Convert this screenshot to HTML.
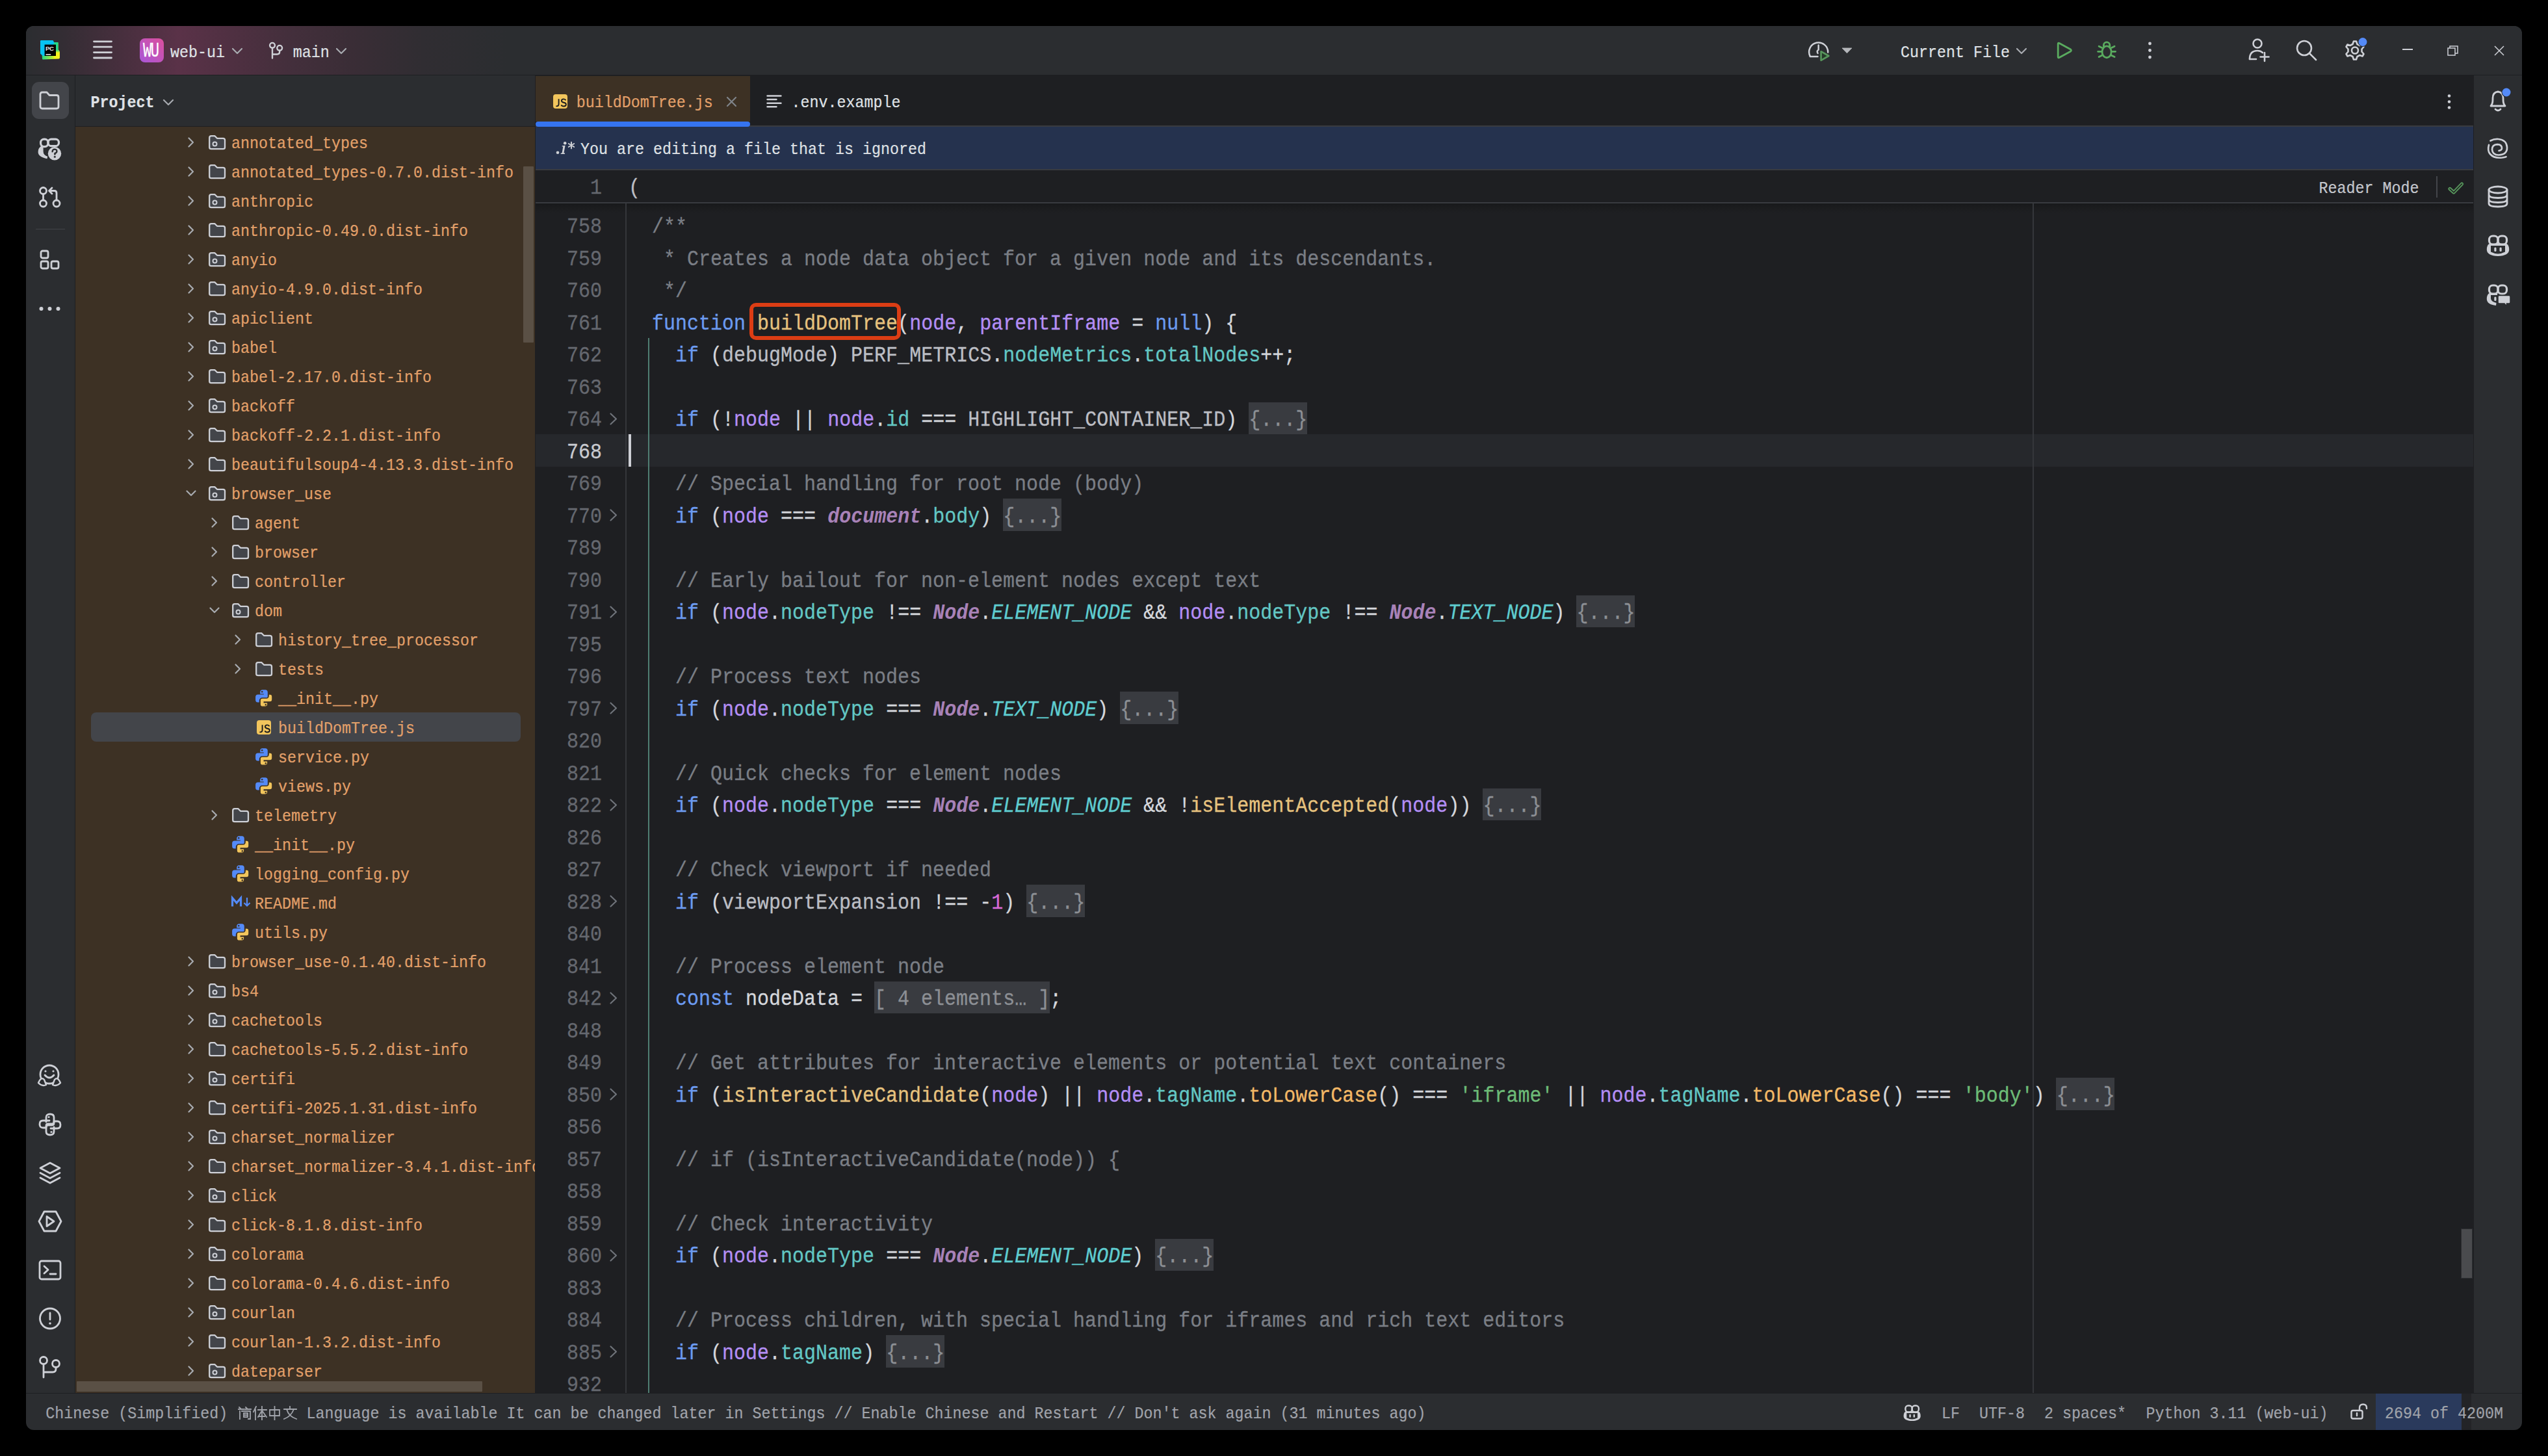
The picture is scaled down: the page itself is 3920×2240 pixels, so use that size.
<!DOCTYPE html><html><head><meta charset="utf-8"><style>
*{margin:0;padding:0;box-sizing:border-box}
html,body{width:3920px;height:2240px;background:#000;overflow:hidden}
body{font-family:"Liberation Mono",monospace}
#win{position:absolute;left:0;top:0;width:3920px;height:2240px;clip-path:inset(40px round 12px);background:#2b2d30}
.a{position:absolute}
.t{white-space:pre;-webkit-text-stroke:0.2px currentColor}
svg.a{overflow:visible}
.s{fill:none;stroke:#ced0d6;stroke-width:2.6;stroke-linecap:round;stroke-linejoin:round}
.code{font-size:30px;line-height:49.5px;white-space:pre;color:#bcbec4;transform:scaleY(1.08);transform-origin:0 32.74px;-webkit-text-stroke:0.3px currentColor}
.k{color:#6c9bf0}.f{color:#e6c27e}.m{color:#f2b866}.p{color:#b48ef5}.pr{color:#63c7c4}
.c{color:#7a7e85}.st{color:#6dbb77}.n{color:#d86ad8}.cls{color:#a882b8;font-style:italic;font-weight:bold;-webkit-text-stroke:0}
.sc{color:#5fcdd0;font-style:italic}.w{color:#d5d7dc}
.fold{color:#8c8f94}
</style></head><body><div id="win"><div class="a" style="left:40px;top:40px;width:3840px;height:75px;background:#2b2d30;"></div><div class="a" style="left:40px;top:40px;width:760px;height:75px;background:linear-gradient(90deg,rgb(43,45,48) 0px,rgb(52,45,52) 60px,rgb(72,47,62) 150px,rgb(90,50,72) 235px,rgb(80,48,66) 310px,rgb(68,47,60) 400px,rgb(58,45,54) 500px,rgb(48,45,50) 610px,rgb(43,45,48) 740px);"></div><div class="a" style="left:40px;top:115px;width:3840px;height:1px;background:#1e1f22;"></div><svg class="a" style="left:62px;top:62px;" width="30" height="30" viewBox="0 0 30 30"><defs><linearGradient id="pcg" x1="0" y1="0" x2="1" y2="0"><stop offset="0" stop-color="#21d789"/><stop offset=".55" stop-color="#a8ec3c"/><stop offset=".75" stop-color="#f5f21e"/></linearGradient><linearGradient id="pcg2" x1="0" y1="0" x2="0" y2="1"><stop offset="0" stop-color="#21d789"/><stop offset=".45" stop-color="#21d789"/><stop offset=".65" stop-color="#f5f21e"/></linearGradient></defs>
<path d="M2.5 21 L3 28.5 Q3.2 29.8 4.5 29.6 L28.5 28.5 Q29.8 28.4 29.8 27 V17.5 L27.5 14 V4 Q27.5 3 26.5 3 H20 L14 12 Z" fill="url(#pcg)"/><path d="M20 3 H26.5 Q27.5 3 27.5 4 V14 L29.8 17.5 V27 L22 28 Z" fill="url(#pcg2)"/>
<path d="M0 1.2 Q0 0 1.2 0 H19.5 L21.5 3.5 L13 24 H4 L0 20.5 Z" fill="#07c3f2"/>
<rect x="6.6" y="6.6" width="17.4" height="17.4" fill="#000"/><text x="7.9" y="15.9" font-family="Liberation Sans" font-weight="bold" font-size="9.6" fill="#e8e8e8" letter-spacing="-0.4">PC</text><rect x="8.5" y="21" width="7.7" height="1.7" fill="#d8d8d8"/></svg><svg class="a" style="left:143px;top:62px;" width="30" height="30" viewBox="0 0 30 30"><line x1="1.5" y1="1.8" x2="28.5" y2="1.8" stroke="#ced0d6" stroke-width="2.8" stroke-linecap="round"/><line x1="1.5" y1="10.2" x2="28.5" y2="10.2" stroke="#ced0d6" stroke-width="2.8" stroke-linecap="round"/><line x1="1.5" y1="18.6" x2="28.5" y2="18.6" stroke="#ced0d6" stroke-width="2.8" stroke-linecap="round"/><line x1="1.5" y1="27" x2="28.5" y2="27" stroke="#ced0d6" stroke-width="2.8" stroke-linecap="round"/></svg><svg class="a" style="left:215px;top:59px;" width="37" height="37" viewBox="0 0 37 37"><defs><linearGradient id="wug" x1="0" y1="1" x2="1" y2="0"><stop offset="0" stop-color="#a857d8"/><stop offset="1" stop-color="#dc4f9c"/></linearGradient></defs>
<rect x="0" y="0" width="37" height="37" rx="8" fill="url(#wug)"/></svg><div class="a t" style="left:219.5px;top:67.58px;font-size:23.33px;line-height:26.43px;color:#ffffff;transform:scaleY(1.35);transform-origin:0 19.42px;letter-spacing:-1.5px;transform:scale(0.95,1.35)">WU</div><div class="a t" style="left:262px;top:68.58px;font-size:23.33px;line-height:26.43px;color:#dfe1e5;transform:scaleY(1.14);transform-origin:0 19.42px;">web-ui</div><svg class="a" style="left:356.5px;top:73.5px;" width="16" height="9" viewBox="0 0 16 9"><path d="M1 1 L8 8 L15 1" fill="none" stroke="#a8abb0" stroke-width="2.2" stroke-linecap="round" stroke-linejoin="round"/></svg><svg class="a" style="left:414px;top:65px;" width="22" height="26" viewBox="0 0 22 26"><circle cx="5" cy="4.8" r="3.9" fill="none" stroke="#ced0d6" stroke-width="2.4" stroke-linecap="round"/><circle cx="16.2" cy="8.8" r="3.9" fill="none" stroke="#ced0d6" stroke-width="2.4" stroke-linecap="round"/><path d="M5 8.7 V24.5 M16.2 12.7 V14.5 Q16.2 18.5 12.2 18.5 H5" fill="none" stroke="#ced0d6" stroke-width="2.4" stroke-linecap="round"/></svg><div class="a t" style="left:450.8px;top:68.58px;font-size:23.33px;line-height:26.43px;color:#dfe1e5;transform:scaleY(1.14);transform-origin:0 19.42px;">main</div><svg class="a" style="left:517px;top:73.5px;" width="16" height="9" viewBox="0 0 16 9"><path d="M1 1 L8 8 L15 1" fill="none" stroke="#a8abb0" stroke-width="2.2" stroke-linecap="round" stroke-linejoin="round"/></svg><svg class="a" style="left:2775px;top:55px;" width="85" height="45" viewBox="0 0 85 45"><path d="M9.8 31.6 A14.5 14.5 0 1 1 37.2 25.5" fill="none" stroke="#ced0d6" stroke-width="2.5" stroke-linecap="round"/><path d="M9.8 32 H21.5" stroke="#ced0d6" stroke-width="2.5" stroke-linecap="round"/><path d="M22.7 14.6 V21.5 Q19.6 23.4 21.6 27" fill="none" stroke="#ced0d6" stroke-width="2.5" stroke-linecap="round"/><path d="M26.6 24.2 L38.4 31 L26.6 37.8 Z" fill="#253a28" stroke="#57965c" stroke-width="2.6" stroke-linejoin="round"/><path d="M59 19 H74 L66.5 26.7 Z" fill="#b4b6ba" stroke="#b4b6ba" stroke-width="0.8" stroke-linejoin="round"/></svg><div class="a t" style="left:2924px;top:68.58px;font-size:23.33px;line-height:26.43px;color:#dfe1e5;transform:scaleY(1.14);transform-origin:0 19.42px;">Current File</div><svg class="a" style="left:3102px;top:74px;" width="16" height="9" viewBox="0 0 16 9"><path d="M1 1 L8 8 L15 1" fill="none" stroke="#a8abb0" stroke-width="2.2" stroke-linecap="round" stroke-linejoin="round"/></svg><svg class="a" style="left:3164px;top:64px;" width="25" height="27" viewBox="0 0 25 27"><path d="M2.2 3.5 Q2.2 1.4 4.2 2.4 L21.6 12 Q23.2 13.5 21.6 15 L4.2 24.6 Q2.2 25.6 2.2 23.5 Z" fill="none" stroke="#5aab5f" stroke-width="2.8" stroke-linejoin="round"/></svg><svg class="a" style="left:3220px;top:58px;" width="42" height="37" viewBox="0 0 42 37"><path d="M16.4 14.5 V11.5 A4.7 4.7 0 0 1 25.8 11.5 V14.5" fill="none" stroke="#5aab5f" stroke-width="2.8"/><ellipse cx="21.1" cy="21.85" rx="7.1" ry="8.9" fill="none" stroke="#5aab5f" stroke-width="2.8"/><path d="M9.1 13.2 L13.7 15.4 M7.6 21.3 H12.4 M9.1 29.5 L13.7 27.2 M33.1 13.2 L28.5 15.4 M34.6 21.3 H29.8 M33.1 29.5 L28.5 27.2" stroke="#5aab5f" stroke-width="2.8" stroke-linecap="round"/></svg><svg class="a" style="left:3303px;top:64px;" width="10" height="27" viewBox="0 0 10 27"><circle cx="4.5" cy="3" r="2.4" fill="#ced0d6"/><circle cx="4.5" cy="13.5" r="2.4" fill="#ced0d6"/><circle cx="4.5" cy="24" r="2.4" fill="#ced0d6"/></svg><svg class="a" style="left:3459px;top:59px;" width="33" height="36" viewBox="0 0 33 36"><circle cx="14" cy="8" r="6.5" class="s"/><path d="M2 32 Q2 19 14 19 Q19 19 22 22" class="s"/><path d="M2 32 H12 M25 22 V35 M18.5 28.5 H31.5" class="s"/></svg><svg class="a" style="left:3532px;top:61px;" width="33" height="33" viewBox="0 0 33 33"><circle cx="13" cy="13" r="11" class="s"/><path d="M21 21 L31 31" class="s"/></svg><svg class="a" style="left:3606px;top:59px;" width="34" height="36" viewBox="0 0 34 36"><path d="M17 4.5 L21 4.5 L22.5 9 L26.5 11 L30.5 9.5 L32.5 13 L29.5 16.5 L29.5 20.5 L32.5 24 L30.5 27.5 L26.5 26 L22.5 28 L21 32.5 L17 32.5 L15.5 28 L11.5 26 L7.5 27.5 L5.5 24 L8.5 20.5 L8.5 16.5 L5.5 13 L7.5 9.5 L11.5 11 L15.5 9 Z" transform="translate(-2,0)" class="s"/><circle cx="17" cy="18.5" r="5" class="s"/><circle cx="29" cy="5.5" r="7.5" fill="#2b2d30"/><circle cx="29" cy="5.5" r="6.5" fill="#548af7"/></svg><div class="a" style="left:3696px;top:75px;width:16px;height:2px;background:#ced0d6;"></div><svg class="a" style="left:3765px;top:70px;" width="17" height="16" viewBox="0 0 17 16"><rect x="1" y="4" width="11" height="11" fill="none" stroke="#ced0d6" stroke-width="1.5"/><path d="M4 4 V1 H16 V12 H12" fill="none" stroke="#ced0d6" stroke-width="1.5"/></svg><svg class="a" style="left:3837px;top:70px;" width="16" height="16" viewBox="0 0 16 16"><path d="M1 1 L15 15 M15 1 L1 15" stroke="#ced0d6" stroke-width="1.5"/></svg><div class="a" style="left:115px;top:116px;width:1px;height:2027px;background:#1e1f22;"></div><div class="a" style="left:49px;top:126px;width:57px;height:57px;background:#43454a;border-radius:11px"></div><svg class="a" style="left:59px;top:139px;" width="34" height="30" viewBox="0 0 34 30"><path d="M3 6 Q3 3 6 3 H13 L17 7.5 H28 Q31 7.5 31 10.5 V25 Q31 28 28 28 H6 Q3 28 3 25 Z" fill="none" stroke="#ced0d6" stroke-width="2.8" stroke-linecap="round" stroke-linejoin="round"/></svg><svg class="a" style="left:58px;top:212px;" width="36" height="36" viewBox="0 0 36 36"><rect x="4.6" y="2.2" width="11.4" height="11.4" rx="5" fill="none" stroke="#ced0d6" stroke-width="3.2"/><rect x="16" y="2.2" width="16.5" height="10.5" rx="5" fill="none" stroke="#ced0d6" stroke-width="3.2"/><path d="M5 13 Q0.6 16 0.6 22 Q0.8 29.5 14.5 32.2 L15.2 28.8 Q8.6 26.5 8.6 21 L8.6 13 Z" fill="#ced0d6"/><circle cx="26" cy="24.2" r="10.2" fill="#ced0d6"/><path d="M22.6 21.2 Q22.8 17.6 26.2 17.6 Q29.6 17.8 29.4 20.8 Q29.2 23 26.4 24 V25.6" fill="none" stroke="#2b2d30" stroke-width="2.4" stroke-linecap="round"/><circle cx="26.3" cy="29.2" r="1.5" fill="#2b2d30"/></svg><svg class="a" style="left:58px;top:286px;" width="36" height="34" viewBox="0 0 36 34"><circle cx="8.5" cy="7.5" r="5" fill="none" stroke="#ced0d6" stroke-width="2.8" stroke-linecap="round" stroke-linejoin="round"/><circle cx="8.5" cy="27" r="5" fill="none" stroke="#ced0d6" stroke-width="2.8" stroke-linecap="round" stroke-linejoin="round"/><circle cx="29" cy="27" r="5" fill="none" stroke="#ced0d6" stroke-width="2.8" stroke-linecap="round" stroke-linejoin="round"/><path d="M8.5 12.5 V22 M29 22 V11 Q29 7.5 25.5 7.5 H18 M22 3 L17.5 7.5 L22 12" fill="none" stroke="#ced0d6" stroke-width="2.8" stroke-linecap="round" stroke-linejoin="round"/></svg><div class="a" style="left:55px;top:352px;width:45px;height:1px;background:#43454a;"></div><svg class="a" style="left:60px;top:384px;" width="34" height="32" viewBox="0 0 34 32"><rect x="3" y="2" width="11" height="11" rx="2.5" fill="none" stroke="#ced0d6" stroke-width="2.8" stroke-linecap="round" stroke-linejoin="round"/><rect x="3" y="18" width="11" height="11" rx="2.5" fill="none" stroke="#ced0d6" stroke-width="2.8" stroke-linecap="round" stroke-linejoin="round"/><rect x="19" y="18" width="11" height="11" rx="2.5" fill="none" stroke="#ced0d6" stroke-width="2.8" stroke-linecap="round" stroke-linejoin="round"/></svg><svg class="a" style="left:60px;top:469px;" width="34" height="12" viewBox="0 0 34 12"><circle cx="3.5" cy="6" r="3" fill="#ced0d6"/><circle cx="16.5" cy="6" r="3" fill="#ced0d6"/><circle cx="29.5" cy="6" r="3" fill="#ced0d6"/></svg><svg class="a" style="left:57px;top:1636px;" width="40" height="38" viewBox="0 0 40 38"><circle cx="19" cy="17" r="14" fill="none" stroke="#ced0d6" stroke-width="2.8" stroke-linecap="round" stroke-linejoin="round"/><path d="M12 18 Q19 26 26 18" fill="none" stroke="#ced0d6" stroke-width="2.8" stroke-linecap="round" stroke-linejoin="round"/><circle cx="13" cy="12" r="1.6" fill="#ced0d6"/><circle cx="25" cy="12" r="1.6" fill="#ced0d6"/><path d="M2 30 Q6 20 11 25 L14 33 Q8 36 2 30 Z M36 30 Q32 20 27 25 L24 33 Q30 36 36 30 Z" fill="#2b2d30" stroke="#ced0d6" stroke-width="2.4" stroke-linejoin="round"/></svg><svg class="a" style="left:59px;top:1712px;" width="36" height="36" viewBox="0 0 36 36"><path d="M12 14 V7 Q12 2 18 2 Q24 2 24 7 V14 Q24 17 21 17 H15 Q12 17 12 20 V23 H7 Q2 23 2 17.5 Q2 12 7 12 H17" fill="none" stroke="#ced0d6" stroke-width="2.8" stroke-linecap="round" stroke-linejoin="round"/><path d="M24 22 V29 Q24 34 18 34 Q12 34 12 29 V22 Q12 19 15 19 H21 Q24 19 24 16 V13 H29 Q34 13 34 18.5 Q34 24 29 24 H19" fill="none" stroke="#ced0d6" stroke-width="2.8" stroke-linecap="round" stroke-linejoin="round"/><circle cx="16" cy="6.5" r="1.6" fill="#ced0d6"/><circle cx="20" cy="29.5" r="1.6" fill="#ced0d6"/></svg><svg class="a" style="left:59px;top:1787px;" width="36" height="36" viewBox="0 0 36 36"><path d="M18 2 L33 10 L18 18 L3 10 Z" fill="none" stroke="#ced0d6" stroke-width="2.8" stroke-linecap="round" stroke-linejoin="round"/><path d="M3 17.5 L18 25.5 L33 17.5 M3 25 L18 33 L33 25" fill="none" stroke="#ced0d6" stroke-width="2.8" stroke-linecap="round" stroke-linejoin="round"/></svg><svg class="a" style="left:58px;top:1862px;" width="38" height="34" viewBox="0 0 38 34"><path d="M10 2 H28 L36 17 L28 32 H10 L2 17 Z" fill="none" stroke="#ced0d6" stroke-width="2.8" stroke-linecap="round" stroke-linejoin="round"/><path d="M14 9.5 L25 17 L14 24.5 Z" fill="none" stroke="#ced0d6" stroke-width="2.8" stroke-linecap="round" stroke-linejoin="round"/></svg><svg class="a" style="left:59px;top:1938px;" width="36" height="33" viewBox="0 0 36 33"><rect x="2" y="2" width="32" height="28" rx="3" fill="none" stroke="#ced0d6" stroke-width="2.8" stroke-linecap="round" stroke-linejoin="round"/><path d="M9 10 L15 15.5 L9 21 M18 22 H27" fill="none" stroke="#ced0d6" stroke-width="2.8" stroke-linecap="round" stroke-linejoin="round"/></svg><svg class="a" style="left:59px;top:2011px;" width="36" height="35" viewBox="0 0 36 35"><circle cx="18" cy="17.5" r="15.5" fill="none" stroke="#ced0d6" stroke-width="2.8" stroke-linecap="round" stroke-linejoin="round"/><path d="M18 9 V19" fill="none" stroke="#ced0d6" stroke-width="2.8" stroke-linecap="round" stroke-linejoin="round"/><circle cx="18" cy="25" r="1.8" fill="#ced0d6"/></svg><svg class="a" style="left:59px;top:2086px;" width="36" height="35" viewBox="0 0 36 35"><circle cx="8" cy="7" r="5.5" fill="none" stroke="#ced0d6" stroke-width="2.8" stroke-linecap="round" stroke-linejoin="round"/><circle cx="27" cy="12" r="5.5" fill="none" stroke="#ced0d6" stroke-width="2.8" stroke-linecap="round" stroke-linejoin="round"/><path d="M8 12.5 V33 M27 17.5 V20 Q27 25 22 25 H8" fill="none" stroke="#ced0d6" stroke-width="2.8" stroke-linecap="round" stroke-linejoin="round"/></svg><div class="a" style="left:116px;top:116px;width:707px;height:78px;background:#2b2d30;"></div><div class="a" style="left:116px;top:194px;width:707px;height:1px;background:#1e1f22;"></div><div class="a" style="left:116px;top:195px;width:707px;height:1948px;background:#3d3124;"></div><div class="a" style="left:823px;top:116px;width:1px;height:2027px;background:#1e1f22;"></div><div class="a t" style="left:139.5px;top:146.08px;font-size:23.33px;line-height:26.43px;color:#dfe1e5;transform:scaleY(1.14);transform-origin:0 19.42px;font-weight:bold">Project</div><svg class="a" style="left:250.5px;top:153px;" width="16" height="9" viewBox="0 0 16 9"><path d="M1 1 L8 8 L15 1" fill="none" stroke="#a8abb0" stroke-width="2.2" stroke-linecap="round" stroke-linejoin="round"/></svg><div class="a" style="left:140px;top:1096px;width:661px;height:45px;background:#43454a;border-radius:8px"></div><div class="a" style="left:116px;top:195px;width:707px;height:1948px;overflow:hidden"><svg class="a" style="left:173px;top:15.5px" width="10" height="16"><path d="M1.5 1.5 L8 8 L1.5 14.5" fill="none" stroke="#a8abb0" stroke-width="2.2" stroke-linecap="round" stroke-linejoin="round"/></svg><svg class="a" style="left:204.5px;top:12.5px" width="27" height="23"><path d="M1.2 4 Q1.2 1.2 4 1.2 H9.5 L13 4.8 H22.3 Q25 4.8 25 7.6 V18.5 Q25 21.2 22.3 21.2 H4 Q1.2 21.2 1.2 18.5 Z" fill="#43454a" stroke="#ced0d6" stroke-width="2.3" stroke-linejoin="round"/><circle cx="9.5" cy="13.5" r="3" fill="none" stroke="#ced0d6" stroke-width="2"/></svg><div class="a t" style="left:240px;top:13.58px;font-size:23.33px;line-height:26.43px;color:#e2a06a;transform:scaleY(1.14);transform-origin:0 19.42px">annotated_types</div><svg class="a" style="left:173px;top:60.5px" width="10" height="16"><path d="M1.5 1.5 L8 8 L1.5 14.5" fill="none" stroke="#a8abb0" stroke-width="2.2" stroke-linecap="round" stroke-linejoin="round"/></svg><svg class="a" style="left:204.5px;top:57.5px" width="27" height="23"><path d="M1.2 4 Q1.2 1.2 4 1.2 H9.5 L13 4.8 H22.3 Q25 4.8 25 7.6 V18.5 Q25 21.2 22.3 21.2 H4 Q1.2 21.2 1.2 18.5 Z" fill="#43454a" stroke="#ced0d6" stroke-width="2.3" stroke-linejoin="round"/></svg><div class="a t" style="left:240px;top:58.58px;font-size:23.33px;line-height:26.43px;color:#e2a06a;transform:scaleY(1.14);transform-origin:0 19.42px">annotated_types-0.7.0.dist-info</div><svg class="a" style="left:173px;top:105.5px" width="10" height="16"><path d="M1.5 1.5 L8 8 L1.5 14.5" fill="none" stroke="#a8abb0" stroke-width="2.2" stroke-linecap="round" stroke-linejoin="round"/></svg><svg class="a" style="left:204.5px;top:102.5px" width="27" height="23"><path d="M1.2 4 Q1.2 1.2 4 1.2 H9.5 L13 4.8 H22.3 Q25 4.8 25 7.6 V18.5 Q25 21.2 22.3 21.2 H4 Q1.2 21.2 1.2 18.5 Z" fill="#43454a" stroke="#ced0d6" stroke-width="2.3" stroke-linejoin="round"/><circle cx="9.5" cy="13.5" r="3" fill="none" stroke="#ced0d6" stroke-width="2"/></svg><div class="a t" style="left:240px;top:103.58px;font-size:23.33px;line-height:26.43px;color:#e2a06a;transform:scaleY(1.14);transform-origin:0 19.42px">anthropic</div><svg class="a" style="left:173px;top:150.5px" width="10" height="16"><path d="M1.5 1.5 L8 8 L1.5 14.5" fill="none" stroke="#a8abb0" stroke-width="2.2" stroke-linecap="round" stroke-linejoin="round"/></svg><svg class="a" style="left:204.5px;top:147.5px" width="27" height="23"><path d="M1.2 4 Q1.2 1.2 4 1.2 H9.5 L13 4.8 H22.3 Q25 4.8 25 7.6 V18.5 Q25 21.2 22.3 21.2 H4 Q1.2 21.2 1.2 18.5 Z" fill="#43454a" stroke="#ced0d6" stroke-width="2.3" stroke-linejoin="round"/></svg><div class="a t" style="left:240px;top:148.58px;font-size:23.33px;line-height:26.43px;color:#e2a06a;transform:scaleY(1.14);transform-origin:0 19.42px">anthropic-0.49.0.dist-info</div><svg class="a" style="left:173px;top:195.5px" width="10" height="16"><path d="M1.5 1.5 L8 8 L1.5 14.5" fill="none" stroke="#a8abb0" stroke-width="2.2" stroke-linecap="round" stroke-linejoin="round"/></svg><svg class="a" style="left:204.5px;top:192.5px" width="27" height="23"><path d="M1.2 4 Q1.2 1.2 4 1.2 H9.5 L13 4.8 H22.3 Q25 4.8 25 7.6 V18.5 Q25 21.2 22.3 21.2 H4 Q1.2 21.2 1.2 18.5 Z" fill="#43454a" stroke="#ced0d6" stroke-width="2.3" stroke-linejoin="round"/><circle cx="9.5" cy="13.5" r="3" fill="none" stroke="#ced0d6" stroke-width="2"/></svg><div class="a t" style="left:240px;top:193.58px;font-size:23.33px;line-height:26.43px;color:#e2a06a;transform:scaleY(1.14);transform-origin:0 19.42px">anyio</div><svg class="a" style="left:173px;top:240.5px" width="10" height="16"><path d="M1.5 1.5 L8 8 L1.5 14.5" fill="none" stroke="#a8abb0" stroke-width="2.2" stroke-linecap="round" stroke-linejoin="round"/></svg><svg class="a" style="left:204.5px;top:237.5px" width="27" height="23"><path d="M1.2 4 Q1.2 1.2 4 1.2 H9.5 L13 4.8 H22.3 Q25 4.8 25 7.6 V18.5 Q25 21.2 22.3 21.2 H4 Q1.2 21.2 1.2 18.5 Z" fill="#43454a" stroke="#ced0d6" stroke-width="2.3" stroke-linejoin="round"/></svg><div class="a t" style="left:240px;top:238.58px;font-size:23.33px;line-height:26.43px;color:#e2a06a;transform:scaleY(1.14);transform-origin:0 19.42px">anyio-4.9.0.dist-info</div><svg class="a" style="left:173px;top:285.5px" width="10" height="16"><path d="M1.5 1.5 L8 8 L1.5 14.5" fill="none" stroke="#a8abb0" stroke-width="2.2" stroke-linecap="round" stroke-linejoin="round"/></svg><svg class="a" style="left:204.5px;top:282.5px" width="27" height="23"><path d="M1.2 4 Q1.2 1.2 4 1.2 H9.5 L13 4.8 H22.3 Q25 4.8 25 7.6 V18.5 Q25 21.2 22.3 21.2 H4 Q1.2 21.2 1.2 18.5 Z" fill="#43454a" stroke="#ced0d6" stroke-width="2.3" stroke-linejoin="round"/><circle cx="9.5" cy="13.5" r="3" fill="none" stroke="#ced0d6" stroke-width="2"/></svg><div class="a t" style="left:240px;top:283.58px;font-size:23.33px;line-height:26.43px;color:#e2a06a;transform:scaleY(1.14);transform-origin:0 19.42px">apiclient</div><svg class="a" style="left:173px;top:330.5px" width="10" height="16"><path d="M1.5 1.5 L8 8 L1.5 14.5" fill="none" stroke="#a8abb0" stroke-width="2.2" stroke-linecap="round" stroke-linejoin="round"/></svg><svg class="a" style="left:204.5px;top:327.5px" width="27" height="23"><path d="M1.2 4 Q1.2 1.2 4 1.2 H9.5 L13 4.8 H22.3 Q25 4.8 25 7.6 V18.5 Q25 21.2 22.3 21.2 H4 Q1.2 21.2 1.2 18.5 Z" fill="#43454a" stroke="#ced0d6" stroke-width="2.3" stroke-linejoin="round"/><circle cx="9.5" cy="13.5" r="3" fill="none" stroke="#ced0d6" stroke-width="2"/></svg><div class="a t" style="left:240px;top:328.58px;font-size:23.33px;line-height:26.43px;color:#e2a06a;transform:scaleY(1.14);transform-origin:0 19.42px">babel</div><svg class="a" style="left:173px;top:375.5px" width="10" height="16"><path d="M1.5 1.5 L8 8 L1.5 14.5" fill="none" stroke="#a8abb0" stroke-width="2.2" stroke-linecap="round" stroke-linejoin="round"/></svg><svg class="a" style="left:204.5px;top:372.5px" width="27" height="23"><path d="M1.2 4 Q1.2 1.2 4 1.2 H9.5 L13 4.8 H22.3 Q25 4.8 25 7.6 V18.5 Q25 21.2 22.3 21.2 H4 Q1.2 21.2 1.2 18.5 Z" fill="#43454a" stroke="#ced0d6" stroke-width="2.3" stroke-linejoin="round"/></svg><div class="a t" style="left:240px;top:373.58px;font-size:23.33px;line-height:26.43px;color:#e2a06a;transform:scaleY(1.14);transform-origin:0 19.42px">babel-2.17.0.dist-info</div><svg class="a" style="left:173px;top:420.5px" width="10" height="16"><path d="M1.5 1.5 L8 8 L1.5 14.5" fill="none" stroke="#a8abb0" stroke-width="2.2" stroke-linecap="round" stroke-linejoin="round"/></svg><svg class="a" style="left:204.5px;top:417.5px" width="27" height="23"><path d="M1.2 4 Q1.2 1.2 4 1.2 H9.5 L13 4.8 H22.3 Q25 4.8 25 7.6 V18.5 Q25 21.2 22.3 21.2 H4 Q1.2 21.2 1.2 18.5 Z" fill="#43454a" stroke="#ced0d6" stroke-width="2.3" stroke-linejoin="round"/><circle cx="9.5" cy="13.5" r="3" fill="none" stroke="#ced0d6" stroke-width="2"/></svg><div class="a t" style="left:240px;top:418.58px;font-size:23.33px;line-height:26.43px;color:#e2a06a;transform:scaleY(1.14);transform-origin:0 19.42px">backoff</div><svg class="a" style="left:173px;top:465.5px" width="10" height="16"><path d="M1.5 1.5 L8 8 L1.5 14.5" fill="none" stroke="#a8abb0" stroke-width="2.2" stroke-linecap="round" stroke-linejoin="round"/></svg><svg class="a" style="left:204.5px;top:462.5px" width="27" height="23"><path d="M1.2 4 Q1.2 1.2 4 1.2 H9.5 L13 4.8 H22.3 Q25 4.8 25 7.6 V18.5 Q25 21.2 22.3 21.2 H4 Q1.2 21.2 1.2 18.5 Z" fill="#43454a" stroke="#ced0d6" stroke-width="2.3" stroke-linejoin="round"/></svg><div class="a t" style="left:240px;top:463.58px;font-size:23.33px;line-height:26.43px;color:#e2a06a;transform:scaleY(1.14);transform-origin:0 19.42px">backoff-2.2.1.dist-info</div><svg class="a" style="left:173px;top:510.5px" width="10" height="16"><path d="M1.5 1.5 L8 8 L1.5 14.5" fill="none" stroke="#a8abb0" stroke-width="2.2" stroke-linecap="round" stroke-linejoin="round"/></svg><svg class="a" style="left:204.5px;top:507.5px" width="27" height="23"><path d="M1.2 4 Q1.2 1.2 4 1.2 H9.5 L13 4.8 H22.3 Q25 4.8 25 7.6 V18.5 Q25 21.2 22.3 21.2 H4 Q1.2 21.2 1.2 18.5 Z" fill="#43454a" stroke="#ced0d6" stroke-width="2.3" stroke-linejoin="round"/></svg><div class="a t" style="left:240px;top:508.58px;font-size:23.33px;line-height:26.43px;color:#e2a06a;transform:scaleY(1.14);transform-origin:0 19.42px">beautifulsoup4-4.13.3.dist-info</div><svg class="a" style="left:170px;top:558.5px" width="16" height="10"><path d="M1.5 1.5 L8 8 L14.5 1.5" fill="none" stroke="#a8abb0" stroke-width="2.2" stroke-linecap="round" stroke-linejoin="round"/></svg><svg class="a" style="left:204.5px;top:552.5px" width="27" height="23"><path d="M1.2 4 Q1.2 1.2 4 1.2 H9.5 L13 4.8 H22.3 Q25 4.8 25 7.6 V18.5 Q25 21.2 22.3 21.2 H4 Q1.2 21.2 1.2 18.5 Z" fill="#43454a" stroke="#ced0d6" stroke-width="2.3" stroke-linejoin="round"/><circle cx="9.5" cy="13.5" r="3" fill="none" stroke="#ced0d6" stroke-width="2"/></svg><div class="a t" style="left:240px;top:553.58px;font-size:23.33px;line-height:26.43px;color:#e2a06a;transform:scaleY(1.14);transform-origin:0 19.42px">browser_use</div><svg class="a" style="left:209px;top:600.5px" width="10" height="16"><path d="M1.5 1.5 L8 8 L1.5 14.5" fill="none" stroke="#a8abb0" stroke-width="2.2" stroke-linecap="round" stroke-linejoin="round"/></svg><svg class="a" style="left:240.5px;top:597.5px" width="27" height="23"><path d="M1.2 4 Q1.2 1.2 4 1.2 H9.5 L13 4.8 H22.3 Q25 4.8 25 7.6 V18.5 Q25 21.2 22.3 21.2 H4 Q1.2 21.2 1.2 18.5 Z" fill="#43454a" stroke="#ced0d6" stroke-width="2.3" stroke-linejoin="round"/></svg><div class="a t" style="left:276px;top:598.58px;font-size:23.33px;line-height:26.43px;color:#e2a06a;transform:scaleY(1.14);transform-origin:0 19.42px">agent</div><svg class="a" style="left:209px;top:645.5px" width="10" height="16"><path d="M1.5 1.5 L8 8 L1.5 14.5" fill="none" stroke="#a8abb0" stroke-width="2.2" stroke-linecap="round" stroke-linejoin="round"/></svg><svg class="a" style="left:240.5px;top:642.5px" width="27" height="23"><path d="M1.2 4 Q1.2 1.2 4 1.2 H9.5 L13 4.8 H22.3 Q25 4.8 25 7.6 V18.5 Q25 21.2 22.3 21.2 H4 Q1.2 21.2 1.2 18.5 Z" fill="#43454a" stroke="#ced0d6" stroke-width="2.3" stroke-linejoin="round"/></svg><div class="a t" style="left:276px;top:643.58px;font-size:23.33px;line-height:26.43px;color:#e2a06a;transform:scaleY(1.14);transform-origin:0 19.42px">browser</div><svg class="a" style="left:209px;top:690.5px" width="10" height="16"><path d="M1.5 1.5 L8 8 L1.5 14.5" fill="none" stroke="#a8abb0" stroke-width="2.2" stroke-linecap="round" stroke-linejoin="round"/></svg><svg class="a" style="left:240.5px;top:687.5px" width="27" height="23"><path d="M1.2 4 Q1.2 1.2 4 1.2 H9.5 L13 4.8 H22.3 Q25 4.8 25 7.6 V18.5 Q25 21.2 22.3 21.2 H4 Q1.2 21.2 1.2 18.5 Z" fill="#43454a" stroke="#ced0d6" stroke-width="2.3" stroke-linejoin="round"/></svg><div class="a t" style="left:276px;top:688.58px;font-size:23.33px;line-height:26.43px;color:#e2a06a;transform:scaleY(1.14);transform-origin:0 19.42px">controller</div><svg class="a" style="left:206px;top:738.5px" width="16" height="10"><path d="M1.5 1.5 L8 8 L14.5 1.5" fill="none" stroke="#a8abb0" stroke-width="2.2" stroke-linecap="round" stroke-linejoin="round"/></svg><svg class="a" style="left:240.5px;top:732.5px" width="27" height="23"><path d="M1.2 4 Q1.2 1.2 4 1.2 H9.5 L13 4.8 H22.3 Q25 4.8 25 7.6 V18.5 Q25 21.2 22.3 21.2 H4 Q1.2 21.2 1.2 18.5 Z" fill="#43454a" stroke="#ced0d6" stroke-width="2.3" stroke-linejoin="round"/><circle cx="9.5" cy="13.5" r="3" fill="none" stroke="#ced0d6" stroke-width="2"/></svg><div class="a t" style="left:276px;top:733.58px;font-size:23.33px;line-height:26.43px;color:#e2a06a;transform:scaleY(1.14);transform-origin:0 19.42px">dom</div><svg class="a" style="left:245px;top:780.5px" width="10" height="16"><path d="M1.5 1.5 L8 8 L1.5 14.5" fill="none" stroke="#a8abb0" stroke-width="2.2" stroke-linecap="round" stroke-linejoin="round"/></svg><svg class="a" style="left:276.5px;top:777.5px" width="27" height="23"><path d="M1.2 4 Q1.2 1.2 4 1.2 H9.5 L13 4.8 H22.3 Q25 4.8 25 7.6 V18.5 Q25 21.2 22.3 21.2 H4 Q1.2 21.2 1.2 18.5 Z" fill="#43454a" stroke="#ced0d6" stroke-width="2.3" stroke-linejoin="round"/></svg><div class="a t" style="left:312px;top:778.58px;font-size:23.33px;line-height:26.43px;color:#e2a06a;transform:scaleY(1.14);transform-origin:0 19.42px">history_tree_processor</div><svg class="a" style="left:245px;top:825.5px" width="10" height="16"><path d="M1.5 1.5 L8 8 L1.5 14.5" fill="none" stroke="#a8abb0" stroke-width="2.2" stroke-linecap="round" stroke-linejoin="round"/></svg><svg class="a" style="left:276.5px;top:822.5px" width="27" height="23"><path d="M1.2 4 Q1.2 1.2 4 1.2 H9.5 L13 4.8 H22.3 Q25 4.8 25 7.6 V18.5 Q25 21.2 22.3 21.2 H4 Q1.2 21.2 1.2 18.5 Z" fill="#43454a" stroke="#ced0d6" stroke-width="2.3" stroke-linejoin="round"/></svg><div class="a t" style="left:312px;top:823.58px;font-size:23.33px;line-height:26.43px;color:#e2a06a;transform:scaleY(1.14);transform-origin:0 19.42px">tests</div><svg class="a" style="left:277px;top:865.5px" width="26" height="26"><path d="M7.2 4 Q7.2 0.2 11 0.2 H15 Q18.8 0.2 18.8 4 V10 Q18.8 13.4 15.4 13.4 H9.3 Q5.8 13.6 5.8 17 V19.4 H3.5 Q0.1 19.4 0.1 15.5 V11.5 Q0.1 7.6 4 7.6 H12.8 V6.6 H7.2 Z" fill="#548af7"/>
<path d="M7.2 4 Q7.2 0.2 11 0.2 H15 Q18.8 0.2 18.8 4 V10 Q18.8 13.4 15.4 13.4 H9.3 Q5.8 13.6 5.8 17 V19.4 H3.5 Q0.1 19.4 0.1 15.5 V11.5 Q0.1 7.6 4 7.6 H12.8 V6.6 H7.2 Z" transform="rotate(180 13 13.2)" fill="#f2c55c" stroke="#3d3124" stroke-width="1.3"/>
<circle cx="10.2" cy="3.2" r="1.25" fill="#3d3124"/><circle cx="15.8" cy="23.2" r="1.25" fill="#3d3124"/></svg><div class="a t" style="left:312px;top:868.58px;font-size:23.33px;line-height:26.43px;color:#e2a06a;transform:scaleY(1.14);transform-origin:0 19.42px">__init__.py</div><svg class="a" style="left:279px;top:912.5px" width="22" height="22"><rect x="0" y="0" width="22" height="22" rx="4" fill="#f2c55c"/><path d="M8.6 7.2 V14.8 Q8.6 18.4 5.3 18.4 H4.4" fill="none" stroke="#1a1b1e" stroke-width="1.9"/><path d="M19.4 9.4 Q18.6 7.4 16.2 7.4 Q12.9 7.4 12.9 10.1 Q12.9 12.2 16.2 12.8 Q19.9 13.4 19.9 15.8 Q19.9 18.5 16.2 18.5 Q13.4 18.5 12.5 16.4" fill="none" stroke="#1a1b1e" stroke-width="1.9"/></svg><div class="a t" style="left:312px;top:913.58px;font-size:23.33px;line-height:26.43px;color:#e2a06a;transform:scaleY(1.14);transform-origin:0 19.42px">buildDomTree.js</div><svg class="a" style="left:277px;top:955.5px" width="26" height="26"><path d="M7.2 4 Q7.2 0.2 11 0.2 H15 Q18.8 0.2 18.8 4 V10 Q18.8 13.4 15.4 13.4 H9.3 Q5.8 13.6 5.8 17 V19.4 H3.5 Q0.1 19.4 0.1 15.5 V11.5 Q0.1 7.6 4 7.6 H12.8 V6.6 H7.2 Z" fill="#548af7"/>
<path d="M7.2 4 Q7.2 0.2 11 0.2 H15 Q18.8 0.2 18.8 4 V10 Q18.8 13.4 15.4 13.4 H9.3 Q5.8 13.6 5.8 17 V19.4 H3.5 Q0.1 19.4 0.1 15.5 V11.5 Q0.1 7.6 4 7.6 H12.8 V6.6 H7.2 Z" transform="rotate(180 13 13.2)" fill="#f2c55c" stroke="#3d3124" stroke-width="1.3"/>
<circle cx="10.2" cy="3.2" r="1.25" fill="#3d3124"/><circle cx="15.8" cy="23.2" r="1.25" fill="#3d3124"/></svg><div class="a t" style="left:312px;top:958.58px;font-size:23.33px;line-height:26.43px;color:#e2a06a;transform:scaleY(1.14);transform-origin:0 19.42px">service.py</div><svg class="a" style="left:277px;top:1000.5px" width="26" height="26"><path d="M7.2 4 Q7.2 0.2 11 0.2 H15 Q18.8 0.2 18.8 4 V10 Q18.8 13.4 15.4 13.4 H9.3 Q5.8 13.6 5.8 17 V19.4 H3.5 Q0.1 19.4 0.1 15.5 V11.5 Q0.1 7.6 4 7.6 H12.8 V6.6 H7.2 Z" fill="#548af7"/>
<path d="M7.2 4 Q7.2 0.2 11 0.2 H15 Q18.8 0.2 18.8 4 V10 Q18.8 13.4 15.4 13.4 H9.3 Q5.8 13.6 5.8 17 V19.4 H3.5 Q0.1 19.4 0.1 15.5 V11.5 Q0.1 7.6 4 7.6 H12.8 V6.6 H7.2 Z" transform="rotate(180 13 13.2)" fill="#f2c55c" stroke="#3d3124" stroke-width="1.3"/>
<circle cx="10.2" cy="3.2" r="1.25" fill="#3d3124"/><circle cx="15.8" cy="23.2" r="1.25" fill="#3d3124"/></svg><div class="a t" style="left:312px;top:1003.58px;font-size:23.33px;line-height:26.43px;color:#e2a06a;transform:scaleY(1.14);transform-origin:0 19.42px">views.py</div><svg class="a" style="left:209px;top:1050.5px" width="10" height="16"><path d="M1.5 1.5 L8 8 L1.5 14.5" fill="none" stroke="#a8abb0" stroke-width="2.2" stroke-linecap="round" stroke-linejoin="round"/></svg><svg class="a" style="left:240.5px;top:1047.5px" width="27" height="23"><path d="M1.2 4 Q1.2 1.2 4 1.2 H9.5 L13 4.8 H22.3 Q25 4.8 25 7.6 V18.5 Q25 21.2 22.3 21.2 H4 Q1.2 21.2 1.2 18.5 Z" fill="#43454a" stroke="#ced0d6" stroke-width="2.3" stroke-linejoin="round"/></svg><div class="a t" style="left:276px;top:1048.58px;font-size:23.33px;line-height:26.43px;color:#e2a06a;transform:scaleY(1.14);transform-origin:0 19.42px">telemetry</div><svg class="a" style="left:241px;top:1090.5px" width="26" height="26"><path d="M7.2 4 Q7.2 0.2 11 0.2 H15 Q18.8 0.2 18.8 4 V10 Q18.8 13.4 15.4 13.4 H9.3 Q5.8 13.6 5.8 17 V19.4 H3.5 Q0.1 19.4 0.1 15.5 V11.5 Q0.1 7.6 4 7.6 H12.8 V6.6 H7.2 Z" fill="#548af7"/>
<path d="M7.2 4 Q7.2 0.2 11 0.2 H15 Q18.8 0.2 18.8 4 V10 Q18.8 13.4 15.4 13.4 H9.3 Q5.8 13.6 5.8 17 V19.4 H3.5 Q0.1 19.4 0.1 15.5 V11.5 Q0.1 7.6 4 7.6 H12.8 V6.6 H7.2 Z" transform="rotate(180 13 13.2)" fill="#f2c55c" stroke="#3d3124" stroke-width="1.3"/>
<circle cx="10.2" cy="3.2" r="1.25" fill="#3d3124"/><circle cx="15.8" cy="23.2" r="1.25" fill="#3d3124"/></svg><div class="a t" style="left:276px;top:1093.58px;font-size:23.33px;line-height:26.43px;color:#e2a06a;transform:scaleY(1.14);transform-origin:0 19.42px">__init__.py</div><svg class="a" style="left:241px;top:1135.5px" width="26" height="26"><path d="M7.2 4 Q7.2 0.2 11 0.2 H15 Q18.8 0.2 18.8 4 V10 Q18.8 13.4 15.4 13.4 H9.3 Q5.8 13.6 5.8 17 V19.4 H3.5 Q0.1 19.4 0.1 15.5 V11.5 Q0.1 7.6 4 7.6 H12.8 V6.6 H7.2 Z" fill="#548af7"/>
<path d="M7.2 4 Q7.2 0.2 11 0.2 H15 Q18.8 0.2 18.8 4 V10 Q18.8 13.4 15.4 13.4 H9.3 Q5.8 13.6 5.8 17 V19.4 H3.5 Q0.1 19.4 0.1 15.5 V11.5 Q0.1 7.6 4 7.6 H12.8 V6.6 H7.2 Z" transform="rotate(180 13 13.2)" fill="#f2c55c" stroke="#3d3124" stroke-width="1.3"/>
<circle cx="10.2" cy="3.2" r="1.25" fill="#3d3124"/><circle cx="15.8" cy="23.2" r="1.25" fill="#3d3124"/></svg><div class="a t" style="left:276px;top:1138.58px;font-size:23.33px;line-height:26.43px;color:#e2a06a;transform:scaleY(1.14);transform-origin:0 19.42px">logging_config.py</div><svg class="a" style="left:239.5px;top:1184.5px" width="30" height="16"><path d="M1.5 14.5 V1.5 L8 9 L14.5 1.5 V14.5" fill="none" stroke="#548af7" stroke-width="3.2" stroke-linejoin="miter"/><path d="M24 1 V13 M19.5 9 L24 13.5 L28.5 9" fill="none" stroke="#548af7" stroke-width="2.2"/></svg><div class="a t" style="left:276px;top:1183.58px;font-size:23.33px;line-height:26.43px;color:#e2a06a;transform:scaleY(1.14);transform-origin:0 19.42px">README.md</div><svg class="a" style="left:241px;top:1225.5px" width="26" height="26"><path d="M7.2 4 Q7.2 0.2 11 0.2 H15 Q18.8 0.2 18.8 4 V10 Q18.8 13.4 15.4 13.4 H9.3 Q5.8 13.6 5.8 17 V19.4 H3.5 Q0.1 19.4 0.1 15.5 V11.5 Q0.1 7.6 4 7.6 H12.8 V6.6 H7.2 Z" fill="#548af7"/>
<path d="M7.2 4 Q7.2 0.2 11 0.2 H15 Q18.8 0.2 18.8 4 V10 Q18.8 13.4 15.4 13.4 H9.3 Q5.8 13.6 5.8 17 V19.4 H3.5 Q0.1 19.4 0.1 15.5 V11.5 Q0.1 7.6 4 7.6 H12.8 V6.6 H7.2 Z" transform="rotate(180 13 13.2)" fill="#f2c55c" stroke="#3d3124" stroke-width="1.3"/>
<circle cx="10.2" cy="3.2" r="1.25" fill="#3d3124"/><circle cx="15.8" cy="23.2" r="1.25" fill="#3d3124"/></svg><div class="a t" style="left:276px;top:1228.58px;font-size:23.33px;line-height:26.43px;color:#e2a06a;transform:scaleY(1.14);transform-origin:0 19.42px">utils.py</div><svg class="a" style="left:173px;top:1275.5px" width="10" height="16"><path d="M1.5 1.5 L8 8 L1.5 14.5" fill="none" stroke="#a8abb0" stroke-width="2.2" stroke-linecap="round" stroke-linejoin="round"/></svg><svg class="a" style="left:204.5px;top:1272.5px" width="27" height="23"><path d="M1.2 4 Q1.2 1.2 4 1.2 H9.5 L13 4.8 H22.3 Q25 4.8 25 7.6 V18.5 Q25 21.2 22.3 21.2 H4 Q1.2 21.2 1.2 18.5 Z" fill="#43454a" stroke="#ced0d6" stroke-width="2.3" stroke-linejoin="round"/></svg><div class="a t" style="left:240px;top:1273.58px;font-size:23.33px;line-height:26.43px;color:#e2a06a;transform:scaleY(1.14);transform-origin:0 19.42px">browser_use-0.1.40.dist-info</div><svg class="a" style="left:173px;top:1320.5px" width="10" height="16"><path d="M1.5 1.5 L8 8 L1.5 14.5" fill="none" stroke="#a8abb0" stroke-width="2.2" stroke-linecap="round" stroke-linejoin="round"/></svg><svg class="a" style="left:204.5px;top:1317.5px" width="27" height="23"><path d="M1.2 4 Q1.2 1.2 4 1.2 H9.5 L13 4.8 H22.3 Q25 4.8 25 7.6 V18.5 Q25 21.2 22.3 21.2 H4 Q1.2 21.2 1.2 18.5 Z" fill="#43454a" stroke="#ced0d6" stroke-width="2.3" stroke-linejoin="round"/><circle cx="9.5" cy="13.5" r="3" fill="none" stroke="#ced0d6" stroke-width="2"/></svg><div class="a t" style="left:240px;top:1318.58px;font-size:23.33px;line-height:26.43px;color:#e2a06a;transform:scaleY(1.14);transform-origin:0 19.42px">bs4</div><svg class="a" style="left:173px;top:1365.5px" width="10" height="16"><path d="M1.5 1.5 L8 8 L1.5 14.5" fill="none" stroke="#a8abb0" stroke-width="2.2" stroke-linecap="round" stroke-linejoin="round"/></svg><svg class="a" style="left:204.5px;top:1362.5px" width="27" height="23"><path d="M1.2 4 Q1.2 1.2 4 1.2 H9.5 L13 4.8 H22.3 Q25 4.8 25 7.6 V18.5 Q25 21.2 22.3 21.2 H4 Q1.2 21.2 1.2 18.5 Z" fill="#43454a" stroke="#ced0d6" stroke-width="2.3" stroke-linejoin="round"/><circle cx="9.5" cy="13.5" r="3" fill="none" stroke="#ced0d6" stroke-width="2"/></svg><div class="a t" style="left:240px;top:1363.58px;font-size:23.33px;line-height:26.43px;color:#e2a06a;transform:scaleY(1.14);transform-origin:0 19.42px">cachetools</div><svg class="a" style="left:173px;top:1410.5px" width="10" height="16"><path d="M1.5 1.5 L8 8 L1.5 14.5" fill="none" stroke="#a8abb0" stroke-width="2.2" stroke-linecap="round" stroke-linejoin="round"/></svg><svg class="a" style="left:204.5px;top:1407.5px" width="27" height="23"><path d="M1.2 4 Q1.2 1.2 4 1.2 H9.5 L13 4.8 H22.3 Q25 4.8 25 7.6 V18.5 Q25 21.2 22.3 21.2 H4 Q1.2 21.2 1.2 18.5 Z" fill="#43454a" stroke="#ced0d6" stroke-width="2.3" stroke-linejoin="round"/></svg><div class="a t" style="left:240px;top:1408.58px;font-size:23.33px;line-height:26.43px;color:#e2a06a;transform:scaleY(1.14);transform-origin:0 19.42px">cachetools-5.5.2.dist-info</div><svg class="a" style="left:173px;top:1455.5px" width="10" height="16"><path d="M1.5 1.5 L8 8 L1.5 14.5" fill="none" stroke="#a8abb0" stroke-width="2.2" stroke-linecap="round" stroke-linejoin="round"/></svg><svg class="a" style="left:204.5px;top:1452.5px" width="27" height="23"><path d="M1.2 4 Q1.2 1.2 4 1.2 H9.5 L13 4.8 H22.3 Q25 4.8 25 7.6 V18.5 Q25 21.2 22.3 21.2 H4 Q1.2 21.2 1.2 18.5 Z" fill="#43454a" stroke="#ced0d6" stroke-width="2.3" stroke-linejoin="round"/><circle cx="9.5" cy="13.5" r="3" fill="none" stroke="#ced0d6" stroke-width="2"/></svg><div class="a t" style="left:240px;top:1453.58px;font-size:23.33px;line-height:26.43px;color:#e2a06a;transform:scaleY(1.14);transform-origin:0 19.42px">certifi</div><svg class="a" style="left:173px;top:1500.5px" width="10" height="16"><path d="M1.5 1.5 L8 8 L1.5 14.5" fill="none" stroke="#a8abb0" stroke-width="2.2" stroke-linecap="round" stroke-linejoin="round"/></svg><svg class="a" style="left:204.5px;top:1497.5px" width="27" height="23"><path d="M1.2 4 Q1.2 1.2 4 1.2 H9.5 L13 4.8 H22.3 Q25 4.8 25 7.6 V18.5 Q25 21.2 22.3 21.2 H4 Q1.2 21.2 1.2 18.5 Z" fill="#43454a" stroke="#ced0d6" stroke-width="2.3" stroke-linejoin="round"/></svg><div class="a t" style="left:240px;top:1498.58px;font-size:23.33px;line-height:26.43px;color:#e2a06a;transform:scaleY(1.14);transform-origin:0 19.42px">certifi-2025.1.31.dist-info</div><svg class="a" style="left:173px;top:1545.5px" width="10" height="16"><path d="M1.5 1.5 L8 8 L1.5 14.5" fill="none" stroke="#a8abb0" stroke-width="2.2" stroke-linecap="round" stroke-linejoin="round"/></svg><svg class="a" style="left:204.5px;top:1542.5px" width="27" height="23"><path d="M1.2 4 Q1.2 1.2 4 1.2 H9.5 L13 4.8 H22.3 Q25 4.8 25 7.6 V18.5 Q25 21.2 22.3 21.2 H4 Q1.2 21.2 1.2 18.5 Z" fill="#43454a" stroke="#ced0d6" stroke-width="2.3" stroke-linejoin="round"/><circle cx="9.5" cy="13.5" r="3" fill="none" stroke="#ced0d6" stroke-width="2"/></svg><div class="a t" style="left:240px;top:1543.58px;font-size:23.33px;line-height:26.43px;color:#e2a06a;transform:scaleY(1.14);transform-origin:0 19.42px">charset_normalizer</div><svg class="a" style="left:173px;top:1590.5px" width="10" height="16"><path d="M1.5 1.5 L8 8 L1.5 14.5" fill="none" stroke="#a8abb0" stroke-width="2.2" stroke-linecap="round" stroke-linejoin="round"/></svg><svg class="a" style="left:204.5px;top:1587.5px" width="27" height="23"><path d="M1.2 4 Q1.2 1.2 4 1.2 H9.5 L13 4.8 H22.3 Q25 4.8 25 7.6 V18.5 Q25 21.2 22.3 21.2 H4 Q1.2 21.2 1.2 18.5 Z" fill="#43454a" stroke="#ced0d6" stroke-width="2.3" stroke-linejoin="round"/></svg><div class="a t" style="left:240px;top:1588.58px;font-size:23.33px;line-height:26.43px;color:#e2a06a;transform:scaleY(1.14);transform-origin:0 19.42px">charset_normalizer-3.4.1.dist-info</div><svg class="a" style="left:173px;top:1635.5px" width="10" height="16"><path d="M1.5 1.5 L8 8 L1.5 14.5" fill="none" stroke="#a8abb0" stroke-width="2.2" stroke-linecap="round" stroke-linejoin="round"/></svg><svg class="a" style="left:204.5px;top:1632.5px" width="27" height="23"><path d="M1.2 4 Q1.2 1.2 4 1.2 H9.5 L13 4.8 H22.3 Q25 4.8 25 7.6 V18.5 Q25 21.2 22.3 21.2 H4 Q1.2 21.2 1.2 18.5 Z" fill="#43454a" stroke="#ced0d6" stroke-width="2.3" stroke-linejoin="round"/><circle cx="9.5" cy="13.5" r="3" fill="none" stroke="#ced0d6" stroke-width="2"/></svg><div class="a t" style="left:240px;top:1633.58px;font-size:23.33px;line-height:26.43px;color:#e2a06a;transform:scaleY(1.14);transform-origin:0 19.42px">click</div><svg class="a" style="left:173px;top:1680.5px" width="10" height="16"><path d="M1.5 1.5 L8 8 L1.5 14.5" fill="none" stroke="#a8abb0" stroke-width="2.2" stroke-linecap="round" stroke-linejoin="round"/></svg><svg class="a" style="left:204.5px;top:1677.5px" width="27" height="23"><path d="M1.2 4 Q1.2 1.2 4 1.2 H9.5 L13 4.8 H22.3 Q25 4.8 25 7.6 V18.5 Q25 21.2 22.3 21.2 H4 Q1.2 21.2 1.2 18.5 Z" fill="#43454a" stroke="#ced0d6" stroke-width="2.3" stroke-linejoin="round"/></svg><div class="a t" style="left:240px;top:1678.58px;font-size:23.33px;line-height:26.43px;color:#e2a06a;transform:scaleY(1.14);transform-origin:0 19.42px">click-8.1.8.dist-info</div><svg class="a" style="left:173px;top:1725.5px" width="10" height="16"><path d="M1.5 1.5 L8 8 L1.5 14.5" fill="none" stroke="#a8abb0" stroke-width="2.2" stroke-linecap="round" stroke-linejoin="round"/></svg><svg class="a" style="left:204.5px;top:1722.5px" width="27" height="23"><path d="M1.2 4 Q1.2 1.2 4 1.2 H9.5 L13 4.8 H22.3 Q25 4.8 25 7.6 V18.5 Q25 21.2 22.3 21.2 H4 Q1.2 21.2 1.2 18.5 Z" fill="#43454a" stroke="#ced0d6" stroke-width="2.3" stroke-linejoin="round"/><circle cx="9.5" cy="13.5" r="3" fill="none" stroke="#ced0d6" stroke-width="2"/></svg><div class="a t" style="left:240px;top:1723.58px;font-size:23.33px;line-height:26.43px;color:#e2a06a;transform:scaleY(1.14);transform-origin:0 19.42px">colorama</div><svg class="a" style="left:173px;top:1770.5px" width="10" height="16"><path d="M1.5 1.5 L8 8 L1.5 14.5" fill="none" stroke="#a8abb0" stroke-width="2.2" stroke-linecap="round" stroke-linejoin="round"/></svg><svg class="a" style="left:204.5px;top:1767.5px" width="27" height="23"><path d="M1.2 4 Q1.2 1.2 4 1.2 H9.5 L13 4.8 H22.3 Q25 4.8 25 7.6 V18.5 Q25 21.2 22.3 21.2 H4 Q1.2 21.2 1.2 18.5 Z" fill="#43454a" stroke="#ced0d6" stroke-width="2.3" stroke-linejoin="round"/></svg><div class="a t" style="left:240px;top:1768.58px;font-size:23.33px;line-height:26.43px;color:#e2a06a;transform:scaleY(1.14);transform-origin:0 19.42px">colorama-0.4.6.dist-info</div><svg class="a" style="left:173px;top:1815.5px" width="10" height="16"><path d="M1.5 1.5 L8 8 L1.5 14.5" fill="none" stroke="#a8abb0" stroke-width="2.2" stroke-linecap="round" stroke-linejoin="round"/></svg><svg class="a" style="left:204.5px;top:1812.5px" width="27" height="23"><path d="M1.2 4 Q1.2 1.2 4 1.2 H9.5 L13 4.8 H22.3 Q25 4.8 25 7.6 V18.5 Q25 21.2 22.3 21.2 H4 Q1.2 21.2 1.2 18.5 Z" fill="#43454a" stroke="#ced0d6" stroke-width="2.3" stroke-linejoin="round"/><circle cx="9.5" cy="13.5" r="3" fill="none" stroke="#ced0d6" stroke-width="2"/></svg><div class="a t" style="left:240px;top:1813.58px;font-size:23.33px;line-height:26.43px;color:#e2a06a;transform:scaleY(1.14);transform-origin:0 19.42px">courlan</div><svg class="a" style="left:173px;top:1860.5px" width="10" height="16"><path d="M1.5 1.5 L8 8 L1.5 14.5" fill="none" stroke="#a8abb0" stroke-width="2.2" stroke-linecap="round" stroke-linejoin="round"/></svg><svg class="a" style="left:204.5px;top:1857.5px" width="27" height="23"><path d="M1.2 4 Q1.2 1.2 4 1.2 H9.5 L13 4.8 H22.3 Q25 4.8 25 7.6 V18.5 Q25 21.2 22.3 21.2 H4 Q1.2 21.2 1.2 18.5 Z" fill="#43454a" stroke="#ced0d6" stroke-width="2.3" stroke-linejoin="round"/></svg><div class="a t" style="left:240px;top:1858.58px;font-size:23.33px;line-height:26.43px;color:#e2a06a;transform:scaleY(1.14);transform-origin:0 19.42px">courlan-1.3.2.dist-info</div><svg class="a" style="left:173px;top:1905.5px" width="10" height="16"><path d="M1.5 1.5 L8 8 L1.5 14.5" fill="none" stroke="#a8abb0" stroke-width="2.2" stroke-linecap="round" stroke-linejoin="round"/></svg><svg class="a" style="left:204.5px;top:1902.5px" width="27" height="23"><path d="M1.2 4 Q1.2 1.2 4 1.2 H9.5 L13 4.8 H22.3 Q25 4.8 25 7.6 V18.5 Q25 21.2 22.3 21.2 H4 Q1.2 21.2 1.2 18.5 Z" fill="#43454a" stroke="#ced0d6" stroke-width="2.3" stroke-linejoin="round"/><circle cx="9.5" cy="13.5" r="3" fill="none" stroke="#ced0d6" stroke-width="2"/></svg><div class="a t" style="left:240px;top:1903.58px;font-size:23.33px;line-height:26.43px;color:#e2a06a;transform:scaleY(1.14);transform-origin:0 19.42px">dateparser</div></div><div class="a" style="left:805px;top:256px;width:16px;height:271px;background:#5a5045;border-radius:1px"></div><div class="a" style="left:118px;top:2125px;width:624px;height:16px;background:#5a5045;border-radius:1px"></div><div class="a" style="left:824px;top:116px;width:2981px;height:2027px;background:#1e1f22;"></div><div class="a" style="left:824px;top:193px;width:2981px;height:2px;background:#393b40;"></div><div class="a" style="left:824px;top:117px;width:330px;height:70px;background:#3d3124;"></div><div class="a" style="left:824px;top:187px;width:330px;height:8px;background:#3574f0;border-radius:4px"></div><svg class="a" style="left:851px;top:145px;" width="22" height="22" viewBox="0 0 22 22"><rect x="0" y="0" width="22" height="22" rx="4" fill="#f2c55c"/><path d="M8.6 7.2 V14.8 Q8.6 18.4 5.3 18.4 H4.4" fill="none" stroke="#1a1b1e" stroke-width="1.9"/><path d="M19.4 9.4 Q18.6 7.4 16.2 7.4 Q12.9 7.4 12.9 10.1 Q12.9 12.2 16.2 12.8 Q19.9 13.4 19.9 15.8 Q19.9 18.5 16.2 18.5 Q13.4 18.5 12.5 16.4" fill="none" stroke="#1a1b1e" stroke-width="1.9"/></svg><div class="a t" style="left:886.7px;top:145.98px;font-size:23.33px;line-height:26.43px;color:#e2a06a;transform:scaleY(1.14);transform-origin:0 19.42px;">buildDomTree.js</div><svg class="a" style="left:1118px;top:149px;" width="15" height="15" viewBox="0 0 15 15"><path d="M1 1 L14 14 M14 1 L1 14" stroke="#7f8389" stroke-width="2.2" stroke-linecap="round"/></svg><svg class="a" style="left:1179px;top:146px;" width="24" height="20" viewBox="0 0 24 20"><path d="M1.5 1.5 H22.5 M1.5 7 H15.5 M1.5 12.8 H22.5 M1.5 18.3 H15.5" stroke="#ced0d6" stroke-width="2.4" stroke-linecap="round"/></svg><div class="a t" style="left:1217.6px;top:145.98px;font-size:23.33px;line-height:26.43px;color:#dfe1e5;transform:scaleY(1.14);transform-origin:0 19.42px;">.env.example</div><svg class="a" style="left:3763px;top:145px;" width="10" height="23" viewBox="0 0 10 23"><circle cx="5" cy="2.5" r="2.3" fill="#ced0d6"/><circle cx="5" cy="11.5" r="2.3" fill="#ced0d6"/><circle cx="5" cy="20.5" r="2.3" fill="#ced0d6"/></svg><div class="a" style="left:824px;top:195px;width:2981px;height:65px;background:#25324e;"></div><div class="a" style="left:824px;top:260px;width:2981px;height:2px;background:#393b40;"></div><svg class="a" style="left:852px;top:214px;" width="36" height="26" viewBox="0 0 36 26"><circle cx="6" cy="20.8" r="2.3" fill="#d0d2d6"/><path d="M12.8 10.2 L17.6 9.8 L15.4 21.4 L17.2 21.4 L16.9 22.9 L10.6 22.9 L10.9 21.4 L12.6 21.4 L14.3 11.6 L12.5 11.6 Z" fill="#d0d2d6"/><circle cx="17.2" cy="6.3" r="2.3" fill="#d0d2d6"/><path d="M27 4.6 V14.4 M22.8 7 L31.2 12 M22.8 12 L31.2 7" stroke="#d0d2d6" stroke-width="1.9" stroke-linecap="round"/></svg><div class="a t" style="left:893px;top:217.58px;font-size:23.33px;line-height:26.43px;color:#dfe1e5;transform:scaleY(1.14);transform-origin:0 19.42px;">You are editing a file that is ignored</div><div class="a" style="left:824px;top:311px;width:2981px;height:2px;background:#393b40;"></div><div class="a t" style="left:3567.5px;top:278.08px;font-size:23.33px;line-height:26.43px;color:#c4c6cc;transform:scaleY(1.14);transform-origin:0 19.42px;">Reader Mode</div><div class="a" style="left:3748px;top:271px;width:2px;height:33px;background:#43454a;"></div><svg class="a" style="left:3766px;top:279px;" width="24" height="20" viewBox="0 0 24 20"><path d="M3 11.5 L9 17 L21.5 4" fill="none" stroke="#57965c" stroke-width="5.2" stroke-linecap="round" stroke-linejoin="round"/><path d="M3 11.5 L9 17 L21.5 4" fill="none" stroke="#1e1f22" stroke-width="1.6" stroke-linecap="round" stroke-linejoin="round"/></svg><div class="a" style="left:824px;top:313px;width:2981px;height:1830px;overflow:hidden"><div class="a code" style="left:143px;top:13.0px;height:49.5px">  <span class="c">/**</span></div><div class="a code" style="left:0;top:13.0px;width:102px;text-align:right;color:#65686f">758</div><div class="a code" style="left:143px;top:62.5px;height:49.5px">  <span class="c"> * Creates a node data object for a given node and its descendants.</span></div><div class="a code" style="left:0;top:62.5px;width:102px;text-align:right;color:#65686f">759</div><div class="a code" style="left:143px;top:112.0px;height:49.5px">  <span class="c"> */</span></div><div class="a code" style="left:0;top:112.0px;width:102px;text-align:right;color:#65686f">760</div><div class="a code" style="left:143px;top:161.5px;height:49.5px">  <span class="k">function</span> <span class="f">buildDomTree</span><span class="w">(</span><span class="p">node</span><span class="w">, </span><span class="p">parentIframe</span><span class="w"> = </span><span class="k">null</span><span class="w">) {</span></div><div class="a code" style="left:0;top:161.5px;width:102px;text-align:right;color:#65686f">761</div><div class="a code" style="left:143px;top:211.0px;height:49.5px">    <span class="k">if</span> <span class="w">(</span>debugMode<span class="w">)</span> PERF_METRICS<span class="w">.</span><span class="pr">nodeMetrics</span><span class="w">.</span><span class="pr">totalNodes</span><span class="w">++;</span></div><div class="a code" style="left:0;top:211.0px;width:102px;text-align:right;color:#65686f">762</div><div class="a code" style="left:143px;top:260.5px;height:49.5px"></div><div class="a code" style="left:0;top:260.5px;width:102px;text-align:right;color:#65686f">763</div><div class="a" style="left:1097px;top:305.5px;width:90px;height:49.5px;background:#393b40"></div><div class="a code" style="left:143px;top:310.0px;height:49.5px">    <span class="k">if</span> <span class="w">(!</span><span class="p">node</span> <span class="w">||</span> <span class="p">node</span><span class="w">.</span><span class="pr">id</span> <span class="w">===</span> HIGHLIGHT_CONTAINER_ID<span class="w">)</span> <span class="fold">{...}</span></div><div class="a code" style="left:0;top:310.0px;width:102px;text-align:right;color:#65686f">764</div><svg class="a" style="left:114px;top:321.5px" width="12" height="19"><path d="M1.5 1.5 L10 9.5 L1.5 17.5" fill="none" stroke="#6f737a" stroke-width="2.2" stroke-linecap="round" stroke-linejoin="round"/></svg><div class="a" style="left:0;top:355.0px;width:2981px;height:49.5px;background:#26282c"></div><div class="a code" style="left:143px;top:359.5px;height:49.5px"></div><div class="a code" style="left:0;top:359.5px;width:102px;text-align:right;color:#c9cbd0">768</div><div class="a code" style="left:143px;top:409.0px;height:49.5px">    <span class="c">// Special handling for root node (body)</span></div><div class="a code" style="left:0;top:409.0px;width:102px;text-align:right;color:#65686f">769</div><div class="a" style="left:719px;top:454.0px;width:90px;height:49.5px;background:#393b40"></div><div class="a code" style="left:143px;top:458.5px;height:49.5px">    <span class="k">if</span> <span class="w">(</span><span class="p">node</span> <span class="w">===</span> <span class="cls">document</span><span class="w">.</span><span class="pr">body</span><span class="w">)</span> <span class="fold">{...}</span></div><div class="a code" style="left:0;top:458.5px;width:102px;text-align:right;color:#65686f">770</div><svg class="a" style="left:114px;top:470.0px" width="12" height="19"><path d="M1.5 1.5 L10 9.5 L1.5 17.5" fill="none" stroke="#6f737a" stroke-width="2.2" stroke-linecap="round" stroke-linejoin="round"/></svg><div class="a code" style="left:143px;top:508.0px;height:49.5px"></div><div class="a code" style="left:0;top:508.0px;width:102px;text-align:right;color:#65686f">789</div><div class="a code" style="left:143px;top:557.5px;height:49.5px">    <span class="c">// Early bailout for non-element nodes except text</span></div><div class="a code" style="left:0;top:557.5px;width:102px;text-align:right;color:#65686f">790</div><div class="a" style="left:1601px;top:602.5px;width:90px;height:49.5px;background:#393b40"></div><div class="a code" style="left:143px;top:607.0px;height:49.5px">    <span class="k">if</span> <span class="w">(</span><span class="p">node</span><span class="w">.</span><span class="pr">nodeType</span> <span class="w">!==</span> <span class="cls">Node</span><span class="w">.</span><span class="sc">ELEMENT_NODE</span> <span class="w">&amp;&amp;</span> <span class="p">node</span><span class="w">.</span><span class="pr">nodeType</span> <span class="w">!==</span> <span class="cls">Node</span><span class="w">.</span><span class="sc">TEXT_NODE</span><span class="w">)</span> <span class="fold">{...}</span></div><div class="a code" style="left:0;top:607.0px;width:102px;text-align:right;color:#65686f">791</div><svg class="a" style="left:114px;top:618.5px" width="12" height="19"><path d="M1.5 1.5 L10 9.5 L1.5 17.5" fill="none" stroke="#6f737a" stroke-width="2.2" stroke-linecap="round" stroke-linejoin="round"/></svg><div class="a code" style="left:143px;top:656.5px;height:49.5px"></div><div class="a code" style="left:0;top:656.5px;width:102px;text-align:right;color:#65686f">795</div><div class="a code" style="left:143px;top:706.0px;height:49.5px">    <span class="c">// Process text nodes</span></div><div class="a code" style="left:0;top:706.0px;width:102px;text-align:right;color:#65686f">796</div><div class="a" style="left:899px;top:751.0px;width:90px;height:49.5px;background:#393b40"></div><div class="a code" style="left:143px;top:755.5px;height:49.5px">    <span class="k">if</span> <span class="w">(</span><span class="p">node</span><span class="w">.</span><span class="pr">nodeType</span> <span class="w">===</span> <span class="cls">Node</span><span class="w">.</span><span class="sc">TEXT_NODE</span><span class="w">)</span> <span class="fold">{...}</span></div><div class="a code" style="left:0;top:755.5px;width:102px;text-align:right;color:#65686f">797</div><svg class="a" style="left:114px;top:767.0px" width="12" height="19"><path d="M1.5 1.5 L10 9.5 L1.5 17.5" fill="none" stroke="#6f737a" stroke-width="2.2" stroke-linecap="round" stroke-linejoin="round"/></svg><div class="a code" style="left:143px;top:805.0px;height:49.5px"></div><div class="a code" style="left:0;top:805.0px;width:102px;text-align:right;color:#65686f">820</div><div class="a code" style="left:143px;top:854.5px;height:49.5px">    <span class="c">// Quick checks for element nodes</span></div><div class="a code" style="left:0;top:854.5px;width:102px;text-align:right;color:#65686f">821</div><div class="a" style="left:1457px;top:899.5px;width:90px;height:49.5px;background:#393b40"></div><div class="a code" style="left:143px;top:904.0px;height:49.5px">    <span class="k">if</span> <span class="w">(</span><span class="p">node</span><span class="w">.</span><span class="pr">nodeType</span> <span class="w">===</span> <span class="cls">Node</span><span class="w">.</span><span class="sc">ELEMENT_NODE</span> <span class="w">&amp;&amp; !</span><span class="f">isElementAccepted</span><span class="w">(</span><span class="p">node</span><span class="w">))</span> <span class="fold">{...}</span></div><div class="a code" style="left:0;top:904.0px;width:102px;text-align:right;color:#65686f">822</div><svg class="a" style="left:114px;top:915.5px" width="12" height="19"><path d="M1.5 1.5 L10 9.5 L1.5 17.5" fill="none" stroke="#6f737a" stroke-width="2.2" stroke-linecap="round" stroke-linejoin="round"/></svg><div class="a code" style="left:143px;top:953.5px;height:49.5px"></div><div class="a code" style="left:0;top:953.5px;width:102px;text-align:right;color:#65686f">826</div><div class="a code" style="left:143px;top:1003.0px;height:49.5px">    <span class="c">// Check viewport if needed</span></div><div class="a code" style="left:0;top:1003.0px;width:102px;text-align:right;color:#65686f">827</div><div class="a" style="left:755px;top:1048.0px;width:90px;height:49.5px;background:#393b40"></div><div class="a code" style="left:143px;top:1052.5px;height:49.5px">    <span class="k">if</span> <span class="w">(</span>viewportExpansion <span class="w">!== -</span><span class="n">1</span><span class="w">)</span> <span class="fold">{...}</span></div><div class="a code" style="left:0;top:1052.5px;width:102px;text-align:right;color:#65686f">828</div><svg class="a" style="left:114px;top:1064.0px" width="12" height="19"><path d="M1.5 1.5 L10 9.5 L1.5 17.5" fill="none" stroke="#6f737a" stroke-width="2.2" stroke-linecap="round" stroke-linejoin="round"/></svg><div class="a code" style="left:143px;top:1102.0px;height:49.5px"></div><div class="a code" style="left:0;top:1102.0px;width:102px;text-align:right;color:#65686f">840</div><div class="a code" style="left:143px;top:1151.5px;height:49.5px">    <span class="c">// Process element node</span></div><div class="a code" style="left:0;top:1151.5px;width:102px;text-align:right;color:#65686f">841</div><div class="a" style="left:521px;top:1196.5px;width:270px;height:49.5px;background:#393b40"></div><div class="a code" style="left:143px;top:1201.0px;height:49.5px">    <span class="k">const</span> <span class="w">nodeData = </span><span class="fold">[ 4 elements… ]</span><span class="w">;</span></div><div class="a code" style="left:0;top:1201.0px;width:102px;text-align:right;color:#65686f">842</div><svg class="a" style="left:114px;top:1212.5px" width="12" height="19"><path d="M1.5 1.5 L10 9.5 L1.5 17.5" fill="none" stroke="#6f737a" stroke-width="2.2" stroke-linecap="round" stroke-linejoin="round"/></svg><div class="a code" style="left:143px;top:1250.5px;height:49.5px"></div><div class="a code" style="left:0;top:1250.5px;width:102px;text-align:right;color:#65686f">848</div><div class="a code" style="left:143px;top:1300.0px;height:49.5px">    <span class="c">// Get attributes for interactive elements or potential text containers</span></div><div class="a code" style="left:0;top:1300.0px;width:102px;text-align:right;color:#65686f">849</div><div class="a" style="left:2339px;top:1345.0px;width:90px;height:49.5px;background:#393b40"></div><div class="a code" style="left:143px;top:1349.5px;height:49.5px">    <span class="k">if</span> <span class="w">(</span><span class="f">isInteractiveCandidate</span><span class="w">(</span><span class="p">node</span><span class="w">) ||</span> <span class="p">node</span><span class="w">.</span><span class="pr">tagName</span><span class="w">.</span><span class="m">toLowerCase</span><span class="w">() ===</span> <span class="st">'iframe'</span> <span class="w">||</span> <span class="p">node</span><span class="w">.</span><span class="pr">tagName</span><span class="w">.</span><span class="m">toLowerCase</span><span class="w">() ===</span> <span class="st">'body'</span><span class="w">)</span> <span class="fold">{...}</span></div><div class="a code" style="left:0;top:1349.5px;width:102px;text-align:right;color:#65686f">850</div><svg class="a" style="left:114px;top:1361.0px" width="12" height="19"><path d="M1.5 1.5 L10 9.5 L1.5 17.5" fill="none" stroke="#6f737a" stroke-width="2.2" stroke-linecap="round" stroke-linejoin="round"/></svg><div class="a code" style="left:143px;top:1399.0px;height:49.5px"></div><div class="a code" style="left:0;top:1399.0px;width:102px;text-align:right;color:#65686f">856</div><div class="a code" style="left:143px;top:1448.5px;height:49.5px">    <span class="c">// if (isInteractiveCandidate(node)) {</span></div><div class="a code" style="left:0;top:1448.5px;width:102px;text-align:right;color:#65686f">857</div><div class="a code" style="left:143px;top:1498.0px;height:49.5px"></div><div class="a code" style="left:0;top:1498.0px;width:102px;text-align:right;color:#65686f">858</div><div class="a code" style="left:143px;top:1547.5px;height:49.5px">    <span class="c">// Check interactivity</span></div><div class="a code" style="left:0;top:1547.5px;width:102px;text-align:right;color:#65686f">859</div><div class="a" style="left:953px;top:1592.5px;width:90px;height:49.5px;background:#393b40"></div><div class="a code" style="left:143px;top:1597.0px;height:49.5px">    <span class="k">if</span> <span class="w">(</span><span class="p">node</span><span class="w">.</span><span class="pr">nodeType</span> <span class="w">===</span> <span class="cls">Node</span><span class="w">.</span><span class="sc">ELEMENT_NODE</span><span class="w">)</span> <span class="fold">{...}</span></div><div class="a code" style="left:0;top:1597.0px;width:102px;text-align:right;color:#65686f">860</div><svg class="a" style="left:114px;top:1608.5px" width="12" height="19"><path d="M1.5 1.5 L10 9.5 L1.5 17.5" fill="none" stroke="#6f737a" stroke-width="2.2" stroke-linecap="round" stroke-linejoin="round"/></svg><div class="a code" style="left:143px;top:1646.5px;height:49.5px"></div><div class="a code" style="left:0;top:1646.5px;width:102px;text-align:right;color:#65686f">883</div><div class="a code" style="left:143px;top:1696.0px;height:49.5px">    <span class="c">// Process children, with special handling for iframes and rich text editors</span></div><div class="a code" style="left:0;top:1696.0px;width:102px;text-align:right;color:#65686f">884</div><div class="a" style="left:539px;top:1741.0px;width:90px;height:49.5px;background:#393b40"></div><div class="a code" style="left:143px;top:1745.5px;height:49.5px">    <span class="k">if</span> <span class="w">(</span><span class="p">node</span><span class="w">.</span><span class="pr">tagName</span><span class="w">)</span> <span class="fold">{...}</span></div><div class="a code" style="left:0;top:1745.5px;width:102px;text-align:right;color:#65686f">885</div><svg class="a" style="left:114px;top:1757.0px" width="12" height="19"><path d="M1.5 1.5 L10 9.5 L1.5 17.5" fill="none" stroke="#6f737a" stroke-width="2.2" stroke-linecap="round" stroke-linejoin="round"/></svg><div class="a code" style="left:143px;top:1795.0px;height:49.5px"></div><div class="a code" style="left:0;top:1795.0px;width:102px;text-align:right;color:#65686f">932</div><div class="a" style="left:143px;top:355.0px;width:4px;height:49.5px;background:#ced0d6"></div><div class="a" style="left:329px;top:153px;width:233px;height:57px;border:6px solid #dc3d14;border-radius:10px"></div></div><div class="a code" style="left:824px;top:265.5px;width:102px;text-align:right;color:#65686f">1</div><div class="a code" style="left:967px;top:265.5px;color:#bcbec4">(</div><div class="a" style="left:824px;top:313px;width:2981px;height:14px;background:linear-gradient(#18191b,rgba(30,31,34,0));"></div><div class="a" style="left:962px;top:313px;width:2px;height:1830px;background:#34363a;"></div><div class="a" style="left:997px;top:519.5px;width:2px;height:1623.5px;background:#4f7d72;"></div><div class="a" style="left:3127px;top:313px;width:2px;height:1830px;background:#35373b;"></div><div class="a" style="left:3786px;top:1890px;width:18px;height:77px;background:#4a4b4e;border:1px solid #2b2d30"></div><div class="a" style="left:3805px;top:116px;width:1px;height:2027px;background:#1e1f22;"></div><svg class="a" style="left:3826px;top:136px;" width="36" height="38" viewBox="0 0 36 38"><path d="M6 27 Q9 24 9 17 V15 Q9 6 17 5 Q25 6 25 15 V17 Q25 24 28 27 Z" fill="none" stroke="#ced0d6" stroke-width="2.8" stroke-linecap="round" stroke-linejoin="round"/><path d="M13 32 Q17 36 21 32" fill="none" stroke="#ced0d6" stroke-width="2.8" stroke-linecap="round" stroke-linejoin="round"/><circle cx="30" cy="6" r="7.5" fill="#2b2d30"/><circle cx="30" cy="6" r="6.5" fill="#548af7"/></svg><svg class="a" style="left:3826px;top:212px;" width="34" height="34" viewBox="0 0 34 34"><path d="M5.5 4.5 Q11 1.6 17.5 2 Q30 3 31 14.5 Q31.5 26 18 26.5 Q8.5 26.5 8 18 Q8 10.5 16 10.2 Q23 10.5 23 16 Q22.8 19.5 18.5 19.8 M3 11 Q0.5 20 5 25 Q11 32 23.5 30.5 Q27 30 29.5 29.2" fill="none" stroke="#ced0d6" stroke-width="2.7" stroke-linecap="round"/></svg><svg class="a" style="left:3826px;top:285px;" width="34" height="36" viewBox="0 0 34 36"><ellipse cx="17" cy="7" rx="14" ry="5" fill="none" stroke="#ced0d6" stroke-width="2.8" stroke-linecap="round" stroke-linejoin="round"/><path d="M3 7 V28 Q3 33 17 33 Q31 33 31 28 V7 M3 14.5 Q3 19.5 17 19.5 Q31 19.5 31 14.5 M3 21.5 Q3 26.5 17 26.5 Q31 26.5 31 21.5" fill="none" stroke="#ced0d6" stroke-width="2.8" stroke-linecap="round" stroke-linejoin="round"/></svg><svg class="a" style="left:3825px;top:361px;" width="36" height="34" viewBox="0 0 36 34"><rect x="4.5" y="2" width="13.5" height="13" rx="5.5" fill="none" stroke="#ced0d6" stroke-width="3.2"/><rect x="18" y="2" width="13.5" height="13" rx="5.5" fill="none" stroke="#ced0d6" stroke-width="3.2"/><path d="M0.8 23 Q0.8 16 5 13.8 L31 13.8 Q35.2 16 35.2 23 Q35 32.5 18 33 Q1 32.5 0.8 23 Z" fill="#ced0d6"/><path d="M7 17 H29 V26.5 Q23 29.5 18 29.5 Q13 29.5 7 26.5 Z" fill="#2b2d30"/><rect x="12.3" y="19.5" width="3.2" height="6.5" rx="1.6" fill="#ced0d6"/><rect x="20.5" y="19.5" width="3.2" height="6.5" rx="1.6" fill="#ced0d6"/></svg><svg class="a" style="left:3825px;top:437px;" width="38" height="36" viewBox="0 0 38 36"><rect x="4.5" y="2" width="13.5" height="13" rx="5.5" fill="none" stroke="#ced0d6" stroke-width="3.2"/><rect x="18" y="2" width="13.5" height="13" rx="5.5" fill="none" stroke="#ced0d6" stroke-width="3.2"/><path d="M5 13.8 Q0.8 16 0.8 23 Q1 31.5 15 33 L15.5 29 Q7 27 7 22 V17 H17 V13.8 Z" fill="#ced0d6"/><rect x="12.3" y="19.5" width="3.2" height="6.5" rx="1.6" fill="#ced0d6"/><path d="M20 17.5 Q18 17.5 18 19.5 V28 Q18 30 20 30 H28 L31 34 L31.5 30 H35 Q37 30 37 28 V19.5 Q37 17.5 35 17.5 Z" fill="#ced0d6" stroke="#2b2d30" stroke-width="1.5"/></svg><div class="a" style="left:40px;top:2143px;width:3840px;height:1px;background:#1e1f22;"></div><div class="a t" style="left:70.2px;top:2162.58px;font-size:23.33px;line-height:26.43px;color:#a0a3aa;transform:scaleY(1.14);transform-origin:0 19.42px;">Chinese (Simplified) </div><div class="a t" style="left:471.5px;top:2162.58px;font-size:23.33px;line-height:26.43px;color:#a0a3aa;transform:scaleY(1.14);transform-origin:0 19.42px;">Language is available It can be changed later in Settings // Enable Chinese and Restart // Don&#x27;t ask again (31 minutes ago)</div><svg class="a" style="left:364.5px;top:2162px;" width="23" height="23" viewBox="0 0 23 23"><path fill="none" stroke="#a0a3aa" stroke-width="1.8" stroke-linecap="square" d="M3 3 L6 6 M2 6 H10 M13 3 L16 6 M12 6 H21 M4 9 V21 M7 9 H20 V21 H17 M10 12 H16 V18 H10 Z M10 15 H16"/></svg><svg class="a" style="left:387.8px;top:2162px;" width="23" height="23" viewBox="0 0 23 23"><path fill="none" stroke="#a0a3aa" stroke-width="1.8" stroke-linecap="square" d="M6 2 L2 10 M5 7 V22 M9 7 H22 M15 2 V22 M15 8 L9 18 M15 8 L22 18 M11 17 H19"/></svg><svg class="a" style="left:411.2px;top:2162px;" width="23" height="23" viewBox="0 0 23 23"><path fill="none" stroke="#a0a3aa" stroke-width="1.8" stroke-linecap="square" d="M4 7 H19 V16 H4 Z M11.5 2 V22"/></svg><svg class="a" style="left:434.5px;top:2162px;" width="23" height="23" viewBox="0 0 23 23"><path fill="none" stroke="#a0a3aa" stroke-width="1.8" stroke-linecap="square" d="M11 2 V5 M2 6 H21 M6 6 Q9 17 21 21 M17 6 Q13 17 2 21"/></svg><svg class="a" style="left:2927.5px;top:2160.5px;" width="28" height="26" viewBox="0 0 28 26"><g transform="scale(0.76)"><rect x="4.5" y="2" width="13.5" height="13" rx="5.5" fill="none" stroke="#ced0d6" stroke-width="3.2"/><rect x="18" y="2" width="13.5" height="13" rx="5.5" fill="none" stroke="#ced0d6" stroke-width="3.2"/><path d="M0.8 23 Q0.8 16 5 13.8 L31 13.8 Q35.2 16 35.2 23 Q35 32.5 18 33 Q1 32.5 0.8 23 Z" fill="#ced0d6"/><path d="M7 17 H29 V26.5 Q23 29.5 18 29.5 Q13 29.5 7 26.5 Z" fill="#2b2d30"/><rect x="12.3" y="19.5" width="3.2" height="6.5" rx="1.6" fill="#ced0d6"/><rect x="20.5" y="19.5" width="3.2" height="6.5" rx="1.6" fill="#ced0d6"/></g></svg><div class="a t" style="left:2987px;top:2162.58px;font-size:23.33px;line-height:26.43px;color:#a0a3aa;transform:scaleY(1.14);transform-origin:0 19.42px;">LF</div><div class="a t" style="left:3045px;top:2162.58px;font-size:23.33px;line-height:26.43px;color:#a0a3aa;transform:scaleY(1.14);transform-origin:0 19.42px;">UTF-8</div><div class="a t" style="left:3145px;top:2162.58px;font-size:23.33px;line-height:26.43px;color:#a0a3aa;transform:scaleY(1.14);transform-origin:0 19.42px;">2 spaces*</div><div class="a t" style="left:3301.6px;top:2162.58px;font-size:23.33px;line-height:26.43px;color:#a0a3aa;transform:scaleY(1.14);transform-origin:0 19.42px;">Python 3.11 (web-ui)</div><svg class="a" style="left:3616px;top:2159px;" width="27" height="25" viewBox="0 0 27 25"><rect x="1.5" y="11" width="17" height="12.5" rx="2.5" fill="none" stroke="#ced0d6" stroke-width="2.4"/><path d="M14 11 V7 Q14 1.5 19.5 1.5 Q25 1.5 25 7 V8" fill="none" stroke="#ced0d6" stroke-width="2.4" stroke-linecap="round"/><path d="M10 15 V19" stroke="#ced0d6" stroke-width="2.4" stroke-linecap="round"/></svg><div class="a" style="left:3655px;top:2144px;width:132px;height:56px;background:#2a3a5c;"></div><div class="a" style="left:3787px;top:2144px;width:15px;height:56px;background:#232427;"></div><div class="a t" style="left:3669px;top:2162.58px;font-size:23.33px;line-height:26.43px;color:#a0a3aa;transform:scaleY(1.14);transform-origin:0 19.42px;">2694 of 4200M</div></div></body></html>
